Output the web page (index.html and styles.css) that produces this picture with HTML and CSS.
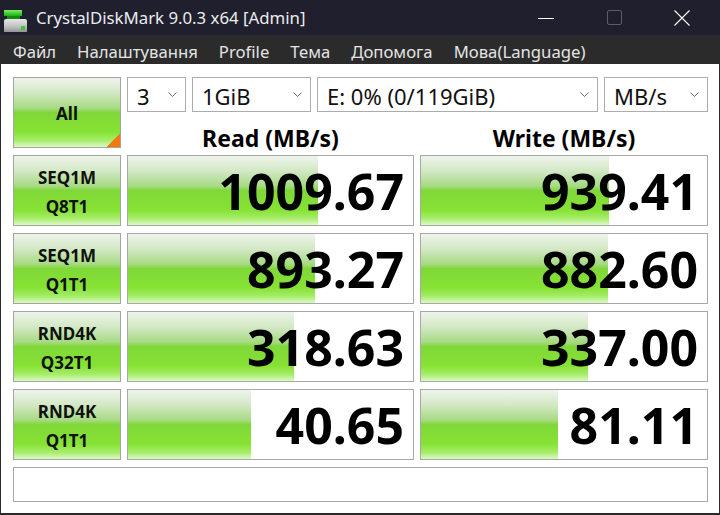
FILE: index.html
```html
<!DOCTYPE html>
<html lang="uk">
<head>
<meta charset="utf-8">
<title>CrystalDiskMark 9.0.3 x64 [Admin]</title>
<link rel="stylesheet" href="styles.css">
</head>
<body>
<div class="window">
  <div class="titlebar">
    <svg class="appicon" width="28" height="28" viewBox="0 0 28 28">
      <defs>
        <linearGradient id="gtop" x1="0" y1="0" x2="0" y2="1">
          <stop offset="0" stop-color="#7cf05a"/>
          <stop offset="1" stop-color="#19b019"/>
        </linearGradient>
        <linearGradient id="gbody" x1="0" y1="0" x2="0" y2="1">
          <stop offset="0" stop-color="#e6e6e6"/>
          <stop offset="0.5" stop-color="#c4c4c4"/>
          <stop offset="1" stop-color="#8a8a8a"/>
        </linearGradient>
      </defs>
      <rect x="4" y="6" width="18" height="6" fill="url(#gtop)"/>
      <rect x="7" y="12" width="13" height="3" fill="#148a14"/>
      <rect x="4" y="15" width="23" height="14" rx="2" fill="url(#gbody)"/>
      <rect x="21" y="22" width="4" height="4" fill="#3cc83c"/>
    </svg>
    <span class="title">CrystalDiskMark 9.0.3 x64 [Admin]</span>
    <div class="controls">
      <span class="ctl"><svg width="16" height="16" viewBox="0 0 16 16"><line x1="0" y1="8.5" x2="16" y2="8.5" stroke="#ffffff" stroke-width="1"/></svg></span>
      <span class="ctl"><svg width="16" height="16" viewBox="0 0 16 16"><rect x="1.5" y="0.5" width="14" height="14" rx="1.5" fill="none" stroke="#5c5c66" stroke-width="1"/></svg></span>
      <span class="ctl"><svg width="16" height="16" viewBox="0 0 16 16"><path d="M0.5 0.5 L15.5 15.5 M15.5 0.5 L0.5 15.5" stroke="#ffffff" stroke-width="1.1" fill="none"/></svg></span>
    </div>
  </div>
  <div class="menubar">
    <span class="menu">Файл</span>
    <span class="menu">Налаштування</span>
    <span class="menu">Profile</span>
    <span class="menu">Тема</span>
    <span class="menu">Допомога</span>
    <span class="menu">Мова(Language)</span>
  </div>
  <div class="content">
    <div class="grid">
      <div class="btn all">All</div>
      <div class="top">
        <div class="selects">
          <div class="select s-count"><span>3</span><svg class="chev" width="9" height="5" viewBox="0 0 9 5"><polyline points="0.5,0.5 4.5,4.5 8.5,0.5" fill="none" stroke="#6a6a6a" stroke-width="1"/></svg></div>
          <div class="select s-size"><span>1GiB</span><svg class="chev" width="9" height="5" viewBox="0 0 9 5"><polyline points="0.5,0.5 4.5,4.5 8.5,0.5" fill="none" stroke="#6a6a6a" stroke-width="1"/></svg></div>
          <div class="select s-drive"><span>E: 0% (0/119GiB)</span><svg class="chev" width="9" height="5" viewBox="0 0 9 5"><polyline points="0.5,0.5 4.5,4.5 8.5,0.5" fill="none" stroke="#6a6a6a" stroke-width="1"/></svg></div>
          <div class="select s-unit"><span>MB/s</span><svg class="chev" width="9" height="5" viewBox="0 0 9 5"><polyline points="0.5,0.5 4.5,4.5 8.5,0.5" fill="none" stroke="#6a6a6a" stroke-width="1"/></svg></div>
        </div>
        <div class="heads">
          <div class="head">Read (MB/s)</div>
          <div class="head">Write (MB/s)</div>
        </div>
      </div>

      <div class="btn label">SEQ1M<br>Q8T1</div>
      <div class="cell" style="--w:190px">1009.67</div>
      <div class="cell" style="--w:188px">939.41</div>

      <div class="btn label">SEQ1M<br>Q1T1</div>
      <div class="cell" style="--w:187px">893.27</div>
      <div class="cell" style="--w:187px">882.60</div>

      <div class="btn label">RND4K<br>Q32T1</div>
      <div class="cell" style="--w:166px">318.63</div>
      <div class="cell" style="--w:167px">337.00</div>

      <div class="btn label">RND4K<br>Q1T1</div>
      <div class="cell" style="--w:123px">40.65</div>
      <div class="cell" style="--w:137px">81.11</div>

      <div class="comment"></div>
    </div>
  </div>
</div>
</body>
</html>
```
FILE: styles.css
```css
* { box-sizing: border-box; }

html, body {
  margin: 0;
  padding: 0;
  width: 720px;
  height: 515px;
  overflow: hidden;
  background: #2b2b2b;
}

.window {
  width: 720px;
  height: 515px;
  display: flex;
  flex-direction: column;
  font-family: "Noto Sans", "Open Sans", sans-serif;
}

.titlebar {
  height: 35px;
  background: #1f1f2e;
  display: flex;
  align-items: center;
  color: #ececec;
}

.appicon {
  margin-left: 0;
  flex: none;
}

.title {
  margin-left: 8px;
  font-size: 16.8px;
}

.controls {
  margin-left: auto;
  display: flex;
  padding-right: 4px;
}

.ctl {
  width: 68px;
  height: 35px;
  display: flex;
  align-items: center;
  justify-content: center;
}

.menubar {
  height: 29px;
  background: #2b2b2b;
  display: flex;
  align-items: center;
  gap: 21px;
  padding: 3px 0 0 13px;
  color: #e4e4e4;
  font-size: 16.7px;
}

.content {
  flex: 1;
  background: #ffffff;
  border-left: 1px solid #2b2b2b;
  border-right: 1px solid #2b2b2b;
  border-bottom: 2px solid #2b2b2b;
  padding: 13px 0 0 12px;
}

.grid {
  display: grid;
  grid-template-columns: 108px 287px 288px;
  grid-template-rows: repeat(5, 71px) 35px;
  column-gap: 6px;
  row-gap: 7px;
}

.btn {
  border: 1px solid #a4a4a4;
  background: linear-gradient(to bottom,
    #eef4ec 0%, #d2e8c4 22%, #a6da82 44%, #80d838 50%,
    #86e234 78%, #a4ec66 90%, #dcf8c8 100%);
  color: #101010;
  font-weight: 700;
  display: flex;
  align-items: center;
  justify-content: center;
  text-align: center;
}

.all {
  font-size: 17px;
  background:
    linear-gradient(to top left, #f5780f 50%, transparent 50%) right bottom / 13px 13px no-repeat,
    linear-gradient(to bottom,
      #eef4ec 0%, #d2e8c4 22%, #a6da82 44%, #80d838 50%,
      #86e234 78%, #a4ec66 90%, #dcf8c8 100%);
  padding-top: 2px;
}

.label {
  font-size: 17px;
  line-height: 29px;
  padding-top: 3px;
}

.top {
  grid-column: 2 / 4;
  display: flex;
  flex-direction: column;
}

.selects {
  display: flex;
  gap: 6px;
  height: 35px;
}

.select {
  border: 1px solid #acacac;
  background: #ffffff;
  display: flex;
  align-items: center;
  justify-content: space-between;
  padding: 0 8px 0 9px;
  font-size: 22px;
  color: #111111;
}

.select span { line-height: 1; padding-top: 2px; }

.s-count { width: 59px; }
.s-size { width: 119px; }
.s-drive { width: 281px; }
.s-unit { flex: 1; }

.chev { flex: none; }

.heads {
  display: grid;
  grid-template-columns: 287px 288px;
  column-gap: 6px;
  height: 36px;
}

.head {
  text-align: center;
  font-weight: 700;
  font-size: 23px;
  line-height: 28px;
  padding-top: 12px;
  color: #000000;
  white-space: nowrap;
}

.cell {
  border: 1px solid #a8a8a8;
  background-color: #ffffff;
  background-image: linear-gradient(to bottom,
    #eef4ec 0%, #d2e8c4 22%, #a6da82 44%, #80d838 50%,
    #86e234 78%, #a4ec66 90%, #dcf8c8 100%);
  background-repeat: no-repeat;
  background-size: var(--w) 100%;
  text-align: right;
  padding: 2px 9px 0 0;
  font-weight: 700;
  font-size: 50px;
  line-height: 67px;
  color: #000000;
}

.comment {
  grid-column: 1 / -1;
  border: 1px solid #a8a8a8;
  background: #ffffff;
}
```
